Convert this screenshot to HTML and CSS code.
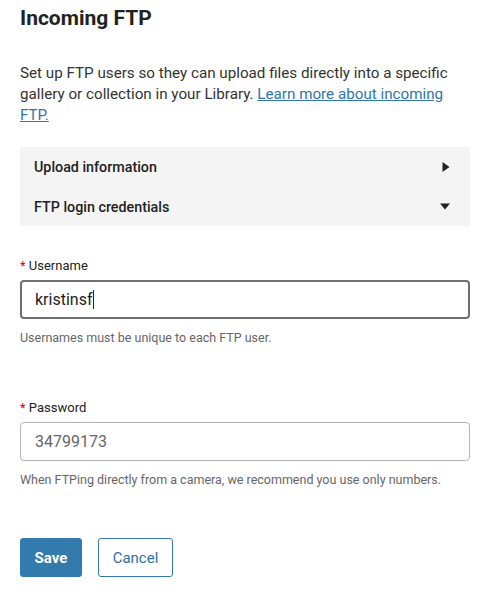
FILE: index.html
```html
<!DOCTYPE html>
<html>
<head>
<meta charset="utf-8">
<link rel="stylesheet" href="styles.css">
</head>
<body>
<div class="page">
  <h1 class="title">Incoming FTP</h1>
  <p class="intro">Set up FTP users so they can upload files directly into a specific gallery or collection in your Library. <a href="#" class="link">Learn more about incoming FTP.</a></p>
  <div class="panel">
    <div class="panel-row">
      <span>Upload information</span>
      <svg class="caret" width="8" height="10" viewBox="0 0 8 10"><path d="M0.5 0 L7.5 5 L0.5 10 Z" fill="#222"/></svg>
    </div>
    <div class="panel-row">
      <span>FTP login credentials</span>
      <svg class="caret" width="10" height="7" viewBox="0 0 10 7"><path d="M0 0.5 L10 0.5 L5 6.5 Z" fill="#222"/></svg>
    </div>
  </div>
  <div class="field field-user">
    <label class="label"><span class="req">*</span> Username</label>
    <div class="input focused">kristinsf<span class="cursor"></span></div>
    <div class="help">Usernames must be unique to each FTP user.</div>
  </div>
  <div class="field field-pass">
    <label class="label"><span class="req">*</span> Password</label>
    <div class="input muted">34799173</div>
    <div class="help">When FTPing directly from a camera, we recommend you use only numbers.</div>
  </div>
  <div class="actions">
    <button class="btn btn-primary">Save</button>
    <button class="btn btn-secondary">Cancel</button>
  </div>
</div>
</body>
</html>
```
FILE: styles.css
```css
* { box-sizing: border-box; }
html, body { margin: 0; padding: 0; background: #fff; }
body { font-family: Roboto, "Liberation Sans", Arial, sans-serif; color: #333; }
.page { padding: 6px 25px 0 20px; width: 495px; }
.title { margin: 0; font-size: 21px; font-weight: 700; line-height: 24px; color: #222; }
.intro { margin: 33px 0 0; font-size: 15.2px; line-height: 21px; color: #333; }
.link { color: #2f76ab; text-decoration: underline; }
.panel { margin-top: 21px; background: #f4f4f4; padding: 0 20px 0 14px; }
.panel-row { display: flex; justify-content: space-between; align-items: center; height: 39px; font-size: 14.3px; font-weight: 500; color: #222; }
.panel-row:first-child { height: 40px; }
.caret { display: block; }
.field-user { margin-top: 32px; }
.field-pass { margin-top: 54px; }
.label { display: block; font-size: 13px; line-height: 16px; color: #222; }
.req { color: #d0021b; }
.input { margin-top: 6px; height: 39px; border: 1px solid #b4b4b4; border-radius: 4px; padding: 0 14px; display: flex; align-items: center; font-size: 16px; color: #222; }
.input.focused { border: 2px solid #6f6f6f; padding: 0 13px; }
.input.muted { color: #666; }
.cursor { display: inline-block; width: 1px; height: 19px; background: #222; margin-left: 1px; }
.help { margin-top: 11px; font-size: 12.5px; line-height: 16px; color: #666; }
.actions { margin-top: 50px; display: flex; gap: 16px; }
.btn { height: 39px; border-radius: 3px; font-family: Roboto, "Liberation Sans", Arial, sans-serif; font-size: 15px; padding: 0 13px; cursor: pointer; }
.btn-primary { background: #337aad; color: #fff; border: 1px solid #337aad; font-weight: 700; width: 62px; }
.btn-secondary { background: #fff; color: #2f6fa2; border: 1px solid #337aad; font-weight: 400; width: 75px; }
```
